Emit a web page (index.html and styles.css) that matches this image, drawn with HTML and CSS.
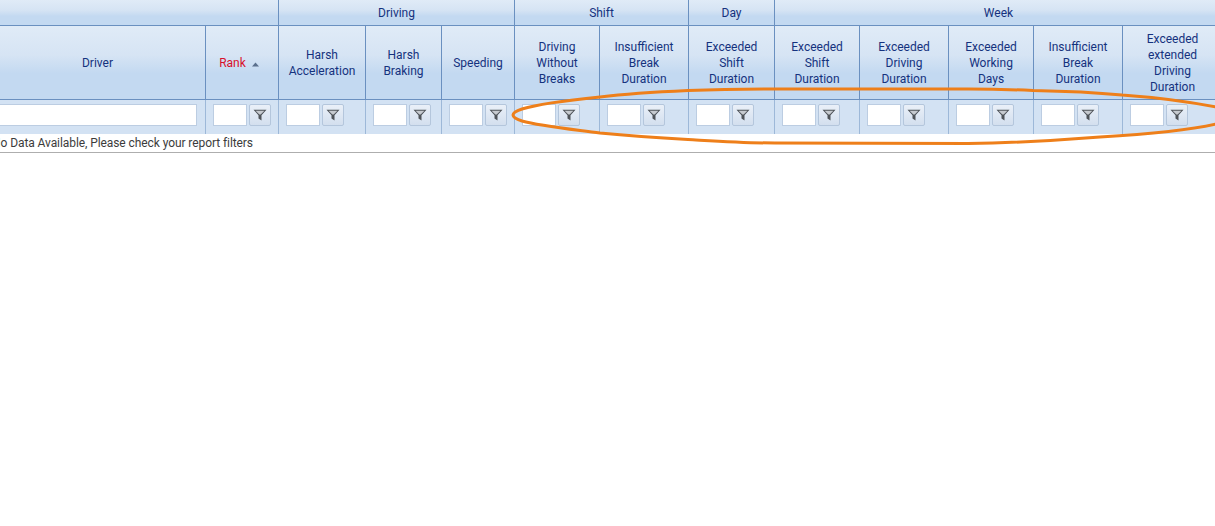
FILE: index.html
```html
<!DOCTYPE html>
<html lang="en">
<head>
<meta charset="utf-8">
<title>Driver report</title>
<link rel="stylesheet" href="styles.css">
</head>
<body>
<svg class="defs" width="0" height="0">
  <symbol id="funnel" viewBox="0 0 14 12">
    <path d="M0.500 0.800h13L8.500 6.300V11.500L5.500 9.600V6.300z" fill="#4e5358"/>
    <path d="M2.600 1.700h8.800L7.700 5.600H6.300z" fill="#c6cacf"/>
  </symbol>
</svg>
<div class="report">
  <div class="grid">
    <div class="cell band span-2"></div>
    <div class="cell band span-3">Driving</div>
    <div class="cell band span-2">Shift</div>
    <div class="cell band">Day</div>
    <div class="cell band span-5 last">Week</div>

    <div class="cell head">Driver</div>
    <div class="cell head sorted">Rank <svg class="sort" width="7" height="5" viewBox="0 0 7 5"><path d="M3.500 0.500 7 4.500H0z" fill="#5a6f8c"/></svg></div>
    <div class="cell head">Harsh<br>Acceleration</div>
    <div class="cell head">Harsh<br>Braking</div>
    <div class="cell head">Speeding</div>
    <div class="cell head">Driving<br>Without<br>Breaks</div>
    <div class="cell head">Insufficient<br>Break<br>Duration</div>
    <div class="cell head">Exceeded<br>Shift<br>Duration</div>
    <div class="cell head">Exceeded<br>Shift<br>Duration</div>
    <div class="cell head">Exceeded<br>Driving<br>Duration</div>
    <div class="cell head">Exceeded<br>Working<br>Days</div>
    <div class="cell head">Insufficient<br>Break<br>Duration</div>
    <div class="cell head last">Exceeded<br>extended<br>Driving<br>Duration</div>

    <div class="cell filter wide"><span class="field grow"></span></div>
    <div class="cell filter"><span class="field"></span><span class="btn"><svg width="14" height="12"><use href="#funnel"/></svg></span></div>
    <div class="cell filter"><span class="field"></span><span class="btn"><svg width="14" height="12"><use href="#funnel"/></svg></span></div>
    <div class="cell filter"><span class="field"></span><span class="btn"><svg width="14" height="12"><use href="#funnel"/></svg></span></div>
    <div class="cell filter"><span class="field"></span><span class="btn"><svg width="14" height="12"><use href="#funnel"/></svg></span></div>
    <div class="cell filter"><span class="field"></span><span class="btn"><svg width="14" height="12"><use href="#funnel"/></svg></span></div>
    <div class="cell filter"><span class="field"></span><span class="btn"><svg width="14" height="12"><use href="#funnel"/></svg></span></div>
    <div class="cell filter"><span class="field"></span><span class="btn"><svg width="14" height="12"><use href="#funnel"/></svg></span></div>
    <div class="cell filter"><span class="field"></span><span class="btn"><svg width="14" height="12"><use href="#funnel"/></svg></span></div>
    <div class="cell filter"><span class="field"></span><span class="btn"><svg width="14" height="12"><use href="#funnel"/></svg></span></div>
    <div class="cell filter"><span class="field"></span><span class="btn"><svg width="14" height="12"><use href="#funnel"/></svg></span></div>
    <div class="cell filter"><span class="field"></span><span class="btn"><svg width="14" height="12"><use href="#funnel"/></svg></span></div>
    <div class="cell filter last"><span class="field"></span><span class="btn"><svg width="14" height="12"><use href="#funnel"/></svg></span></div>

    <div class="empty">No Data Available, Please check your report filters</div>
  </div>
  <svg class="mark" width="1215" height="526" viewBox="0 0 1215 526">
    <path d="M1216 107C1180 100 1150 97 1122 95C1090 92 1060 91 1033 90.500C1000 89 990 89 968 89C930 88.500 860 88.500 775 89C745 89 715 89.500 688 90.500C655 92 625 94 600 97C570 100 535 105 522 109C516 111 513 113 513 115C513 117 516 119 522 121C540 126 570 129 600 133C630 136 660 138 688 139.500C715 141 745 143 775 143L968 143.500C1000 143 1050 141 1100 137C1150 134 1190 130 1216 124" fill="none" stroke="#ee7f1a" stroke-width="3"/>
  </svg>
</div>
</body>
</html>
```

FILE: styles.css
```css
html, body {
  margin: 0;
  height: 100%;
  background: #fff;
}

.defs {
  position: absolute;
}

.report {
  position: relative;
  height: 526px;
  overflow: hidden;
  font-family: Roboto, "Noto Sans", sans-serif;
  font-size: 12px;
  line-height: 16px;
}

.grid {
  display: grid;
  grid-template-columns: 216px 73px 87px 76px 73px 85px 89px 86px 85px 89px 85px 89px 99px;
  grid-template-rows: 26px 74px 34px 19px;
  margin-left: -10px;
  width: 1231px;
}

.cell {
  box-sizing: border-box;
  display: flex;
  align-items: center;
  justify-content: center;
  text-align: center;
  color: #15327e;
  border-right: 1px solid #6a90c0;
}

.band,
.head {
  background: linear-gradient(#e0ebf7 0%, #d6e4f4 40%, #c3d9f1 65%, #c3d9f1 100%);
  border-bottom: 1px solid #6a90c0;
}

.span-2 { grid-column: span 2; }
.span-3 { grid-column: span 3; }
.span-5 { grid-column: span 5; }
.last { border-right: 0; }

.sorted { color: #d8102c; gap: 6px; padding-right: 6px; }
.sort { margin-top: 3px; }

.filter {
  background: #d3e2f3;
  border-right-color: #9db8d8;
  justify-content: flex-start;
  gap: 2px;
  padding: 0 0 4px 7px;
}

.wide { padding-left: 0; }

.field {
  box-sizing: border-box;
  width: 34px;
  height: 22px;
  background: #fff;
  border: 1px solid #bccde2;
}

.grow { flex: 1; margin-right: 8px; }

.btn {
  box-sizing: border-box;
  width: 22px;
  height: 22px;
  display: flex;
  align-items: center;
  justify-content: center;
  background: linear-gradient(#eaf0f8, #d3dfee);
  border: 1px solid #b4c6dc;
  border-radius: 2px;
}

.empty {
  grid-column: 1 / -1;
  box-sizing: border-box;
  padding-left: 2px;
  color: #3c3c3c;
  letter-spacing: -0.08px;
  line-height: 18px;
  border-bottom: 1px solid #aeaeae;
  white-space: nowrap;
}

.mark {
  position: absolute;
  inset: 0;
  pointer-events: none;
}
```
